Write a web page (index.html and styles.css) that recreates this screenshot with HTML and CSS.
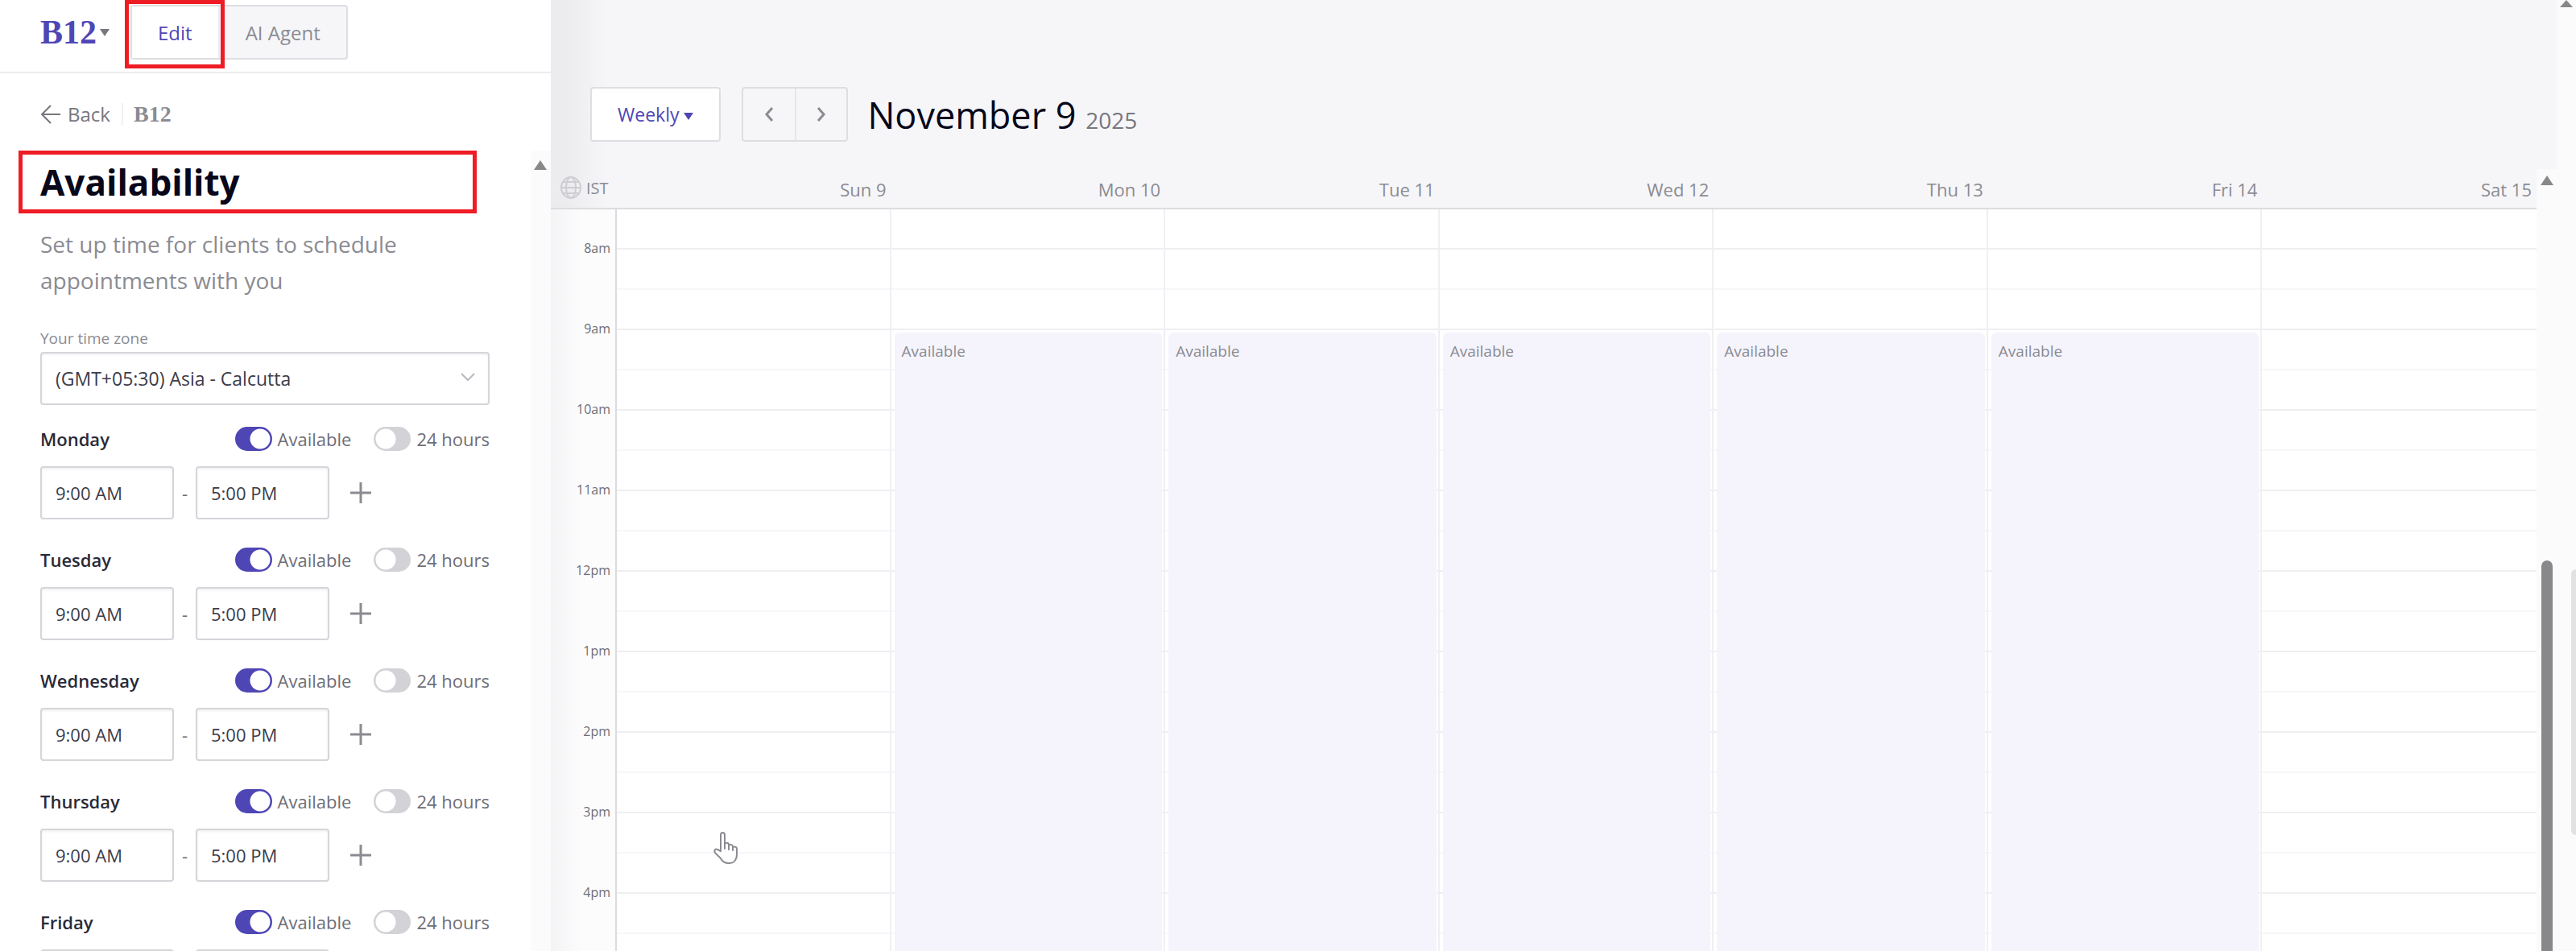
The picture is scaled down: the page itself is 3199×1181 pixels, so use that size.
FILE: index.html
```html
<!DOCTYPE html>
<html lang="en">
<head>
<meta charset="UTF-8">
<meta name="viewport" content="width=device-width, initial-scale=1.0">
<title>Availability</title>
<link rel="stylesheet" href="styles.css">
</head>
<body>
<div class="app">
    <aside class="sidebar">
        <header class="topbar">
            <button type="button" class="logo">B12 <span class="caret"></span></button>
            <nav class="tabs">
                <button type="button" class="tab active marked">Edit</button>
                <button type="button" class="tab">AI Agent</button>
            </nav>
        </header>

        <div class="crumbs">
            <a href="#" class="back">
                <svg width="26" height="24" viewBox="0 0 26 24" fill="none" stroke="currentColor" stroke-width="2"><path d="M25 12H2M13 1L2 12l11 11"/></svg>
                Back
            </a>
            <span class="crumb-logo">B12</span>
        </div>

        <div class="sidebar-body">
            <div class="content">
                <h1>Availability</h1>
                <p class="intro">Set up time for clients to schedule appointments with you</p>

                <label class="zone-label" for="zone">Your time zone</label>
                <div class="zone">
                    <select id="zone">
                        <option>(GMT+05:30) Asia - Calcutta</option>
                    </select>
                    <svg class="zone-arrow" width="18" height="12" viewBox="0 0 18 12" fill="none" stroke="currentColor" stroke-width="2"><path d="M1 2l8 8 8-8"/></svg>
                </div>

                <form id="days"></form>
            </div>
            <div class="scroll">
                <span class="scroll-up"></span>
            </div>
        </div>
    </aside>

    <main class="main">
        <div class="toolbar">
            <button type="button" class="view">Weekly <span class="caret"></span></button>
            <div class="pager">
                <button type="button" aria-label="Previous week"><svg width="12" height="18" viewBox="0 0 12 18" fill="none" stroke="currentColor" stroke-width="3"><path d="M10 1L3 9l7 8"/></svg></button>
                <button type="button" aria-label="Next week"><svg width="12" height="18" viewBox="0 0 12 18" fill="none" stroke="currentColor" stroke-width="3"><path d="M2 1l7 8-7 8"/></svg></button>
            </div>
            <h2>November 9 <small>2025</small></h2>
        </div>

        <div class="calendar">
            <div class="week">
                <div class="week-head">
                    <div class="tz">
                        <svg width="26" height="28" viewBox="0 0 26 28" fill="none" stroke="currentColor" stroke-width="2"><ellipse cx="13" cy="14" rx="12" ry="13"/><ellipse cx="13" cy="14" rx="6" ry="13"/><path d="M1 14h24M3 7h20M3 21h20"/></svg>
                        IST
                    </div>
                    <div class="day-names" id="dayNames"></div>
                </div>
                <div class="week-body">
                    <div class="hours" id="hours"></div>
                    <div class="columns" id="columns"></div>
                    <svg class="pointer" width="30" height="40" viewBox="0 0 30 40" fill="#fff" stroke="#8b8b92" stroke-width="2" stroke-linejoin="round" stroke-linecap="round"><path d="M9 24V4c0-4 5-4 5 0v12c0-3 5-3 5 0v2c0-3 5-3 5 1v1c0-2 5-2 5 1v7c0 7-4 11-10 11-5 0-8-2-10-6L2 26c-2-4 1-5 3-4z"/><path d="M14 15v6M19 17v5M24 19v4" fill="none"/></svg>
                </div>
            </div>
            <div class="scroll">
                <span class="scroll-up"></span>
                <span class="thumb"></span>
            </div>
        </div>
    </main>

    <div class="scroll page-scroll">
        <span class="scroll-up"></span>
        <span class="thumb"></span>
    </div>
</div>

<script>
const days = ['Monday', 'Tuesday', 'Wednesday', 'Thursday', 'Friday'];
const week = ['Sun 9', 'Mon 10', 'Tue 11', 'Wed 12', 'Thu 13', 'Fri 14', 'Sat 15'];
const hours = ['8am', '9am', '10am', '11am', '12pm', '1pm', '2pm', '3pm', '4pm'];

// Opening hours form
document.getElementById('days').innerHTML = days.map(day => {
    const id = day.toLowerCase();
    return `<fieldset class="day">
        <div class="day-head">
            <span class="day-name">${day}</span>
            <input type="checkbox" class="toggle" id="${id}-available" checked>
            <label for="${id}-available">Available</label>
            <input type="checkbox" class="toggle" id="${id}-full">
            <label for="${id}-full">24 hours</label>
        </div>
        <div class="times">
            <input type="text" value="9:00 AM" aria-label="${day} from">
            <span class="dash">-</span>
            <input type="text" value="5:00 PM" aria-label="${day} to">
            <button type="button" class="add" aria-label="Add hours">
                <svg width="26" height="26" viewBox="0 0 26 26" fill="none" stroke="currentColor" stroke-width="3"><path d="M13 0v26M0 13h26"/></svg>
            </button>
        </div>
    </fieldset>`;
}).join('');

// Calendar
document.getElementById('dayNames').innerHTML = week.map(name => `<span>${name}</span>`).join('');
document.getElementById('hours').innerHTML = hours.map(hour => `<span>${hour}</span>`).join('');
document.getElementById('columns').innerHTML = week.map((name, i) => {
    const open = i > 0 && i < 6;
    return `<div class="column">${open ? '<div class="slot">Available</div>' : ''}</div>`;
}).join('');
</script>
</body>
</html>
```

FILE: styles.css
```css
* {
    box-sizing: border-box;
}
body {
    margin: 0;
    font-family: "Open Sans", "Noto Sans", sans-serif;
    font-size: 22px;
    color: #6e6e76;
    background: #fff;
}
button, input, select {
    font: inherit;
    color: inherit;
}
button {
    padding: 0;
    border: 0;
    background: none;
    cursor: pointer;
}
.app {
    display: flex;
    height: 100vh;
    overflow: hidden;
}
.caret {
    display: inline-block;
    border: 6px solid transparent;
    border-top: 9px solid currentColor;
    border-bottom: 0;
}

/* Sidebar */
.sidebar {
    display: flex;
    flex-direction: column;
    flex: 0 0 684px;
    background: #fff;
}
.topbar {
    display: flex;
    flex-shrink: 0;
    align-items: flex-start;
    gap: 26px;
    height: 91px;
    padding: 6px 0 0 50px;
    border-bottom: 2px solid #ececef;
}
.logo {
    display: flex;
    align-items: center;
    gap: 4px;
    height: 68px;
    font-family: "Liberation Serif", serif;
    font-size: 42px;
    font-weight: bold;
    color: #4f46b5;
}
.logo .caret {
    color: #77777d;
}
.tabs {
    display: flex;
    height: 68px;
    border: 2px solid #dedee2;
    border-radius: 4px;
    background: #f6f6f9;
}
.tab {
    padding: 0 32px;
    font-size: 24px;
    color: #8b8b92;
}
.tab.active {
    color: #4f46b5;
    background: #fff;
    border-right: 2px solid #ececef;
}
.marked {
    position: relative;
}
.marked::after {
    content: "";
    position: absolute;
    inset: -8px -8px -13px -9px;
    border: 5px solid #ee1c25;
}
.crumbs {
    display: flex;
    flex-shrink: 0;
    align-items: center;
    height: 96px;
    padding: 6px 50px 0;
}
.back {
    display: flex;
    align-items: center;
    gap: 8px;
    padding-right: 14px;
    border-right: 2px solid #f1f1f3;
    font-size: 24px;
    color: #77777d;
    line-height: 28px;
    text-decoration: none;
}
.crumb-logo {
    padding-left: 13px;
    font-family: "Liberation Serif", serif;
    font-size: 28px;
    font-weight: bold;
    line-height: 28px;
    color: #8b8b92;
}
.sidebar-body {
    display: flex;
    flex: 1;
    min-height: 0;
}
.content {
    flex: 1;
    padding: 0 51px 0 50px;
    overflow: hidden;
}
h1 {
    margin: 0 16px 0 -27px;
    padding: 0 22px;
    border: 5px solid #ee1c25;
    font-size: 44px;
    line-height: 68px;
    color: #08081a;
}
.intro {
    margin: 16px 0 35px;
    font-size: 28px;
    line-height: 45px;
    color: #8b8b92;
}
.zone-label {
    display: block;
    margin-bottom: 3px;
    font-size: 19px;
    line-height: 28px;
    color: #8b8b92;
}
.zone {
    position: relative;
    margin-bottom: 27px;
}
.zone select, .times input {
    height: 66px;
    padding: 0 17px;
    border: 2px solid #d5d5da;
    border-radius: 4px;
    background: #fff;
    box-shadow: inset 0 2px 3px #f1f1f3;
    color: #3c3c4a;
}
.zone select {
    display: block;
    width: 100%;
    appearance: none;
    font-size: 23px;
}
.zone-arrow {
    position: absolute;
    top: 25px;
    right: 18px;
    color: #b9b9bf;
    pointer-events: none;
}
.day {
    margin: 0 0 35px;
    padding: 0;
    border: 0;
}
.day-head {
    display: flex;
    align-items: center;
    height: 30px;
    margin-bottom: 19px;
}
.day-name {
    flex: 1;
    font-weight: 600;
    color: #2a2a38;
}
.day-head label + .toggle {
    margin-left: 28px;
}
.toggle {
    appearance: none;
    width: 46px;
    height: 30px;
    margin: 0 7px 0 0;
    border: 2px solid #d2d2d7;
    border-radius: 15px;
    background: radial-gradient(circle at 13px 13px, #fff 12px, #d2d2d7 13px);
}
.toggle:checked {
    border-color: #4f46b5;
    background: radial-gradient(circle at 29px 13px, #fff 12px, #4f46b5 13px);
}
.times {
    display: flex;
    align-items: center;
}
.times input {
    width: 166px;
}
.dash {
    width: 27px;
    line-height: 24px;
    text-align: center;
}
.add {
    display: flex;
    margin-left: 26px;
    color: #8b8b92;
}

/* Scrollbars */
.scroll {
    display: flex;
    flex-direction: column;
    flex: 0 0 25px;
    align-items: center;
    padding-top: 8px;
    background: #fbfbfc;
}
.sidebar-body .scroll {
    padding: 12px 2px 0 0;
}
.scroll-up {
    border: 8px solid transparent;
    border-top: 0;
    border-bottom: 12px solid #88888b;
}
.thumb {
    width: 14px;
    flex: 1;
    margin-top: 466px;
    border-radius: 7px 7px 0 0;
    background: #88888b;
}
.page-scroll {
    flex-basis: 24px;
    padding-top: 0;
}
.page-scroll .scroll-up {
    border-bottom-width: 9px;
}
.page-scroll .thumb {
    align-self: flex-end;
    flex: 0 0 330px;
    width: 6px;
    margin-top: 698px;
    border-radius: 6px 0 0 6px;
    background: #e2e2e5;
}

/* Calendar */
.main {
    display: flex;
    flex-direction: column;
    flex: 1;
    min-width: 0;
    background: linear-gradient(90deg, #ececef 20px, #f6f6f9 70px);
}
.toolbar {
    display: flex;
    flex-shrink: 0;
    align-items: center;
    height: 210px;
    padding: 74px 50px 0 49px;
}
.view {
    height: 68px;
    padding: 0 32px;
    margin-right: 26px;
    border: 2px solid #dedee2;
    border-radius: 4px;
    background: #fff;
    font-size: 23px;
    color: #4f46b5;
}
.view .caret {
    margin-bottom: 2px;
}
.pager {
    display: flex;
    height: 68px;
    border: 2px solid #dedee2;
    border-radius: 4px;
}
.pager button {
    width: 64px;
    color: #8b8b92;
}
.pager button + button {
    border-left: 2px solid #e6e6ea;
}
h2 {
    margin: 0 0 0 24px;
    font-size: 45px;
    font-weight: 500;
    color: #08081a;
}
h2 small {
    font-size: 28px;
    font-weight: 400;
    color: #77777d;
}
.calendar {
    display: flex;
    flex: 1;
    min-height: 0;
}
.week {
    display: flex;
    flex-direction: column;
    flex: 1;
    min-width: 0;
}
.week-head {
    display: flex;
    flex-shrink: 0;
    height: 50px;
    border-bottom: 2px solid #dcdce0;
    color: #8b8b92;
}
.tz {
    display: flex;
    align-items: center;
    gap: 6px;
    width: 82px;
    padding: 0 0 2px 12px;
    font-size: 20px;
}
.tz svg {
    flex-shrink: 0;
    color: #cdcdd2;
}
.day-names {
    display: grid;
    grid-template-columns: repeat(7, 1fr);
    flex: 1;
    line-height: 50px;
    text-align: right;
}
.day-names span {
    padding-right: 6px;
}
.week-body {
    position: relative;
    display: flex;
    flex: 1;
    min-height: 0;
    overflow: hidden;
}
.hours {
    display: flex;
    flex-direction: column;
    width: 82px;
    padding: 35px 6px 0 0;
    border-right: 2px solid #dcdce0;
    background: linear-gradient(90deg, #f4f4f6, #fcfcfd 40px);
    font-size: 16px;
    text-align: right;
}
.hours span {
    flex: 0 0 100px;
    line-height: 26px;
}
.columns {
    display: grid;
    grid-template-columns: repeat(7, 1fr);
    flex: 1;
    background: #fff;
}
.column {
    display: flex;
    padding: 153px 4px 0;
    background: repeating-linear-gradient(#efeff2 0 2px, #fff 2px 50px, #f7f7f9 50px 52px, #fff 52px 100px) 0 -52px;
    background-size: 100% 2000px;
}
.column + .column {
    margin-left: -2px;
    border-left: 2px solid #f0f0f3;
}
.slot {
    flex: 1;
    padding: 10px 9px;
    border-radius: 6px 6px 0 0;
    background: #f5f4fd;
    font-size: 19px;
    line-height: 26px;
    color: #8b8b92;
}
.pointer {
    position: absolute;
    top: 773px;
    left: 202px;
}
</style>
```
